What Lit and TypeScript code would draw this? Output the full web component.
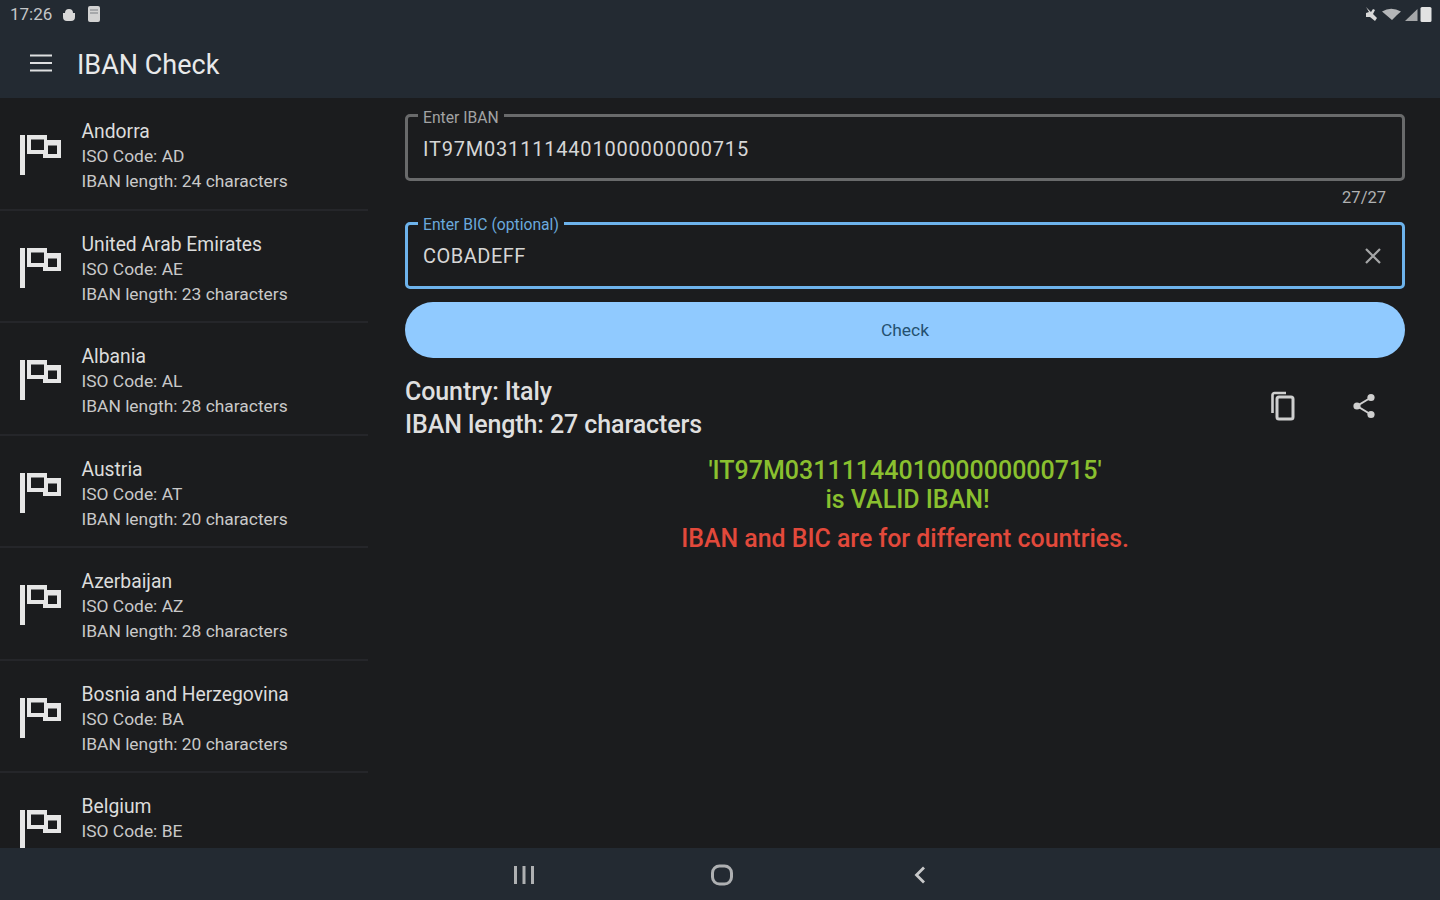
import { LitElement, html, css, svg } from "lit";
import { customElement } from "lit/decorators.js";

const countries = [
  ["Andorra", "AD", 24],
  ["United Arab Emirates", "AE", 23],
  ["Albania", "AL", 28],
  ["Austria", "AT", 20],
  ["Azerbaijan", "AZ", 28],
  ["Bosnia and Herzegovina", "BA", 20],
  ["Belgium", "BE", 0],
] as const;

const flag = svg`<path d="M0 0h5v40H0z" fill="currentColor"/><path d="M7 0h20v5h14v18H23v-4H7z M11 4.500v10.500h13V4.500z M28 10.500v8.500h9v-8.500z" fill="currentColor" fill-rule="evenodd"/>`;

@customElement("app-root")
export class AppRoot extends LitElement {
  static styles = css`
    :host {
      display: flex;
      flex-direction: column;
      width: 1440px;
      height: 900px;
      overflow: hidden;
      background: #1b1c1e;
      color: #e4e4e4;
      font-family: Roboto, "Liberation Sans", sans-serif;
    }
    svg { display: block; }
    .header { height: 98px; flex: none; background: #232a32; display: flex; flex-direction: column; }
    .status { height: 28px; flex: none; display: flex; align-items: center; padding: 0 8px 0 10px; gap: 9px; font-size: 17px; color: #c4c6c8; }
    .status .spacer { flex: 1; }
    .status-right { display: flex; align-items: center; gap: 2px; }
    .toolbar { flex: 1; display: flex; align-items: center; padding-left: 30px; gap: 25px; }
    .title { font-size: 27px; color: #e8e9ea; padding-top: 4px; }
    .body { flex: 1; min-height: 0; display: flex; }
    .list { width: 368px; flex: none; overflow: hidden; }
    .item { height: 112.5px; box-sizing: border-box; display: flex; align-items: flex-start; gap: 19.5px; padding: 21px 0 0 20px; border-bottom: 2px solid #25262a; }
    .item svg { color: #e6e6e6; flex: none; margin-top: 16px; }
    .lines { display: flex; flex-direction: column; color: #c9c9c9; font-size: 17.4px; line-height: 25px; }
    .name { font-size: 19.3px; color: #dcdcdc; }
    .main { flex: 1; min-width: 0; padding: 8.5px 35px 0 37px; box-sizing: border-box; }
    fieldset { margin: 0; padding: 0 15px; height: 74.5px; box-sizing: border-box; border: 3px solid #696a6b; border-radius: 5px; display: flex; align-items: center; justify-content: space-between; }
    legend { font-size: 15.7px; line-height: 14px; padding: 4px 5px 0; margin-left: -5px; color: #a2a3a4; }
    .value { font-size: 20px; letter-spacing: 0.8px; color: #d6d6d6; margin-top: -4px; }
    .focus { border-color: #6db3ec; }
    .focus legend { color: #6aa9dc; }
    .focus .value { letter-spacing: 0.5px; margin-top: -6px; }
    .focus svg { margin: -6px 5px 0 0; color: #a5a6a7; }
    .counter { height: 33px; display: flex; align-items: center; justify-content: flex-end; padding-right: 19px; font-size: 16.5px; color: #b0b1b2; }
    .check { margin-top: 13px; height: 56px; border-radius: 28px; background: #90caff; color: #24506f; display: flex; align-items: center; justify-content: center; font-size: 17.4px; }
    .result { margin-top: 17px; display: flex; align-items: center; }
    .info { flex: 1; font-size: 25px; line-height: 33px; font-weight: 500; color: #dfdfdf; letter-spacing: -0.1px; }
    .actions { display: flex; gap: 56px; padding-right: 29px; align-items: center; color: #cfcfcf; margin-top: -4px; }
    .verdict { margin-top: 15px; text-align: center; font-size: 25px; line-height: 29.5px; font-weight: 500; color: #8ac02f; padding-left: 5px; }
    .verdict-iban { margin-left: -5px; }
    .warn { margin-top: 9px; text-align: center; font-size: 24.9px; line-height: 30px; font-weight: 500; color: #e2493b; }
    .nav { height: 52px; flex: none; background: #232a32; display: flex; align-items: center; color: #aeb0b2; }
    .nav-inner { display: flex; align-items: center; margin-left: 513px; padding-top: 1px; }
    .nav-inner svg:nth-child(1) { margin-right: 176px; }
    .nav-inner svg:nth-child(2) { margin-right: 180px; }
  `;

  render() {
    return html`
      <div class="header">
        <div class="status">
          <span>17:26</span>
          <svg width="16" height="16" viewBox="0 0 16 16"><path d="M2 7h12v4a4 4 0 0 1-4 4H6a4 4 0 0 1-4-4zM4 7a4 4 0 0 1 8 0z" fill="#d8d8d8"/></svg>
          <svg width="16" height="18" viewBox="0 0 16 18"><rect x="2" y="1" width="12" height="16" rx="2" fill="#d2d2d2"/><path d="M4 5h8M4 8h8" stroke="#7b7f83" stroke-width="1"/></svg>
          <span class="spacer"></span>
          <div class="status-right">
            <svg width="16" height="16" viewBox="0 0 16 16"><path d="M3 1l5 5 2-3 2 1-2 4 4 4-2 3-5-4-4 0 0-4 3-1z" fill="#d8d8d8"/></svg>
            <svg width="21" height="14" viewBox="0 0 21 14"><path d="M1 4.500Q10-1 20 4.500L16 8 11 13z" fill="#b4b6b8"/></svg>
            <svg width="14" height="13" viewBox="0 0 14 13"><path d="M13.500 1v12H1z" fill="#a5a7a9"/></svg>
            <svg width="12" height="17" viewBox="0 0 12 17"><rect x="0.500" y="1" width="11" height="15" rx="1.500" fill="#e2e2e2"/></svg>
          </div>
        </div>
        <div class="toolbar">
          <svg width="22" height="18" viewBox="0 0 22 18"><path d="M0 1.500h22M0 9h22M0 16.500h22" stroke="#dedfe0" stroke-width="2.200"/></svg>
          <span class="title">IBAN Check</span>
        </div>
      </div>
      <div class="body">
        <div class="list">
          ${countries.map(
            ([n, c, l]) => html`
              <div class="item">
                <svg width="42" height="40" viewBox="0 0 42 40">${flag}</svg>
                <div class="lines">
                  <span class="name">${n}</span>
                  <span>ISO Code: ${c}</span>
                  ${l ? html`<span>IBAN length: ${l} characters</span>` : ""}
                </div>
              </div>
            `
          )}
        </div>
        <div class="main">
          <fieldset>
            <legend>Enter IBAN</legend>
            <span class="value">IT97M0311114401000000000715</span>
          </fieldset>
          <div class="counter">27/27</div>
          <fieldset class="focus">
            <legend>Enter BIC (optional)</legend>
            <span class="value">COBADEFF</span>
            <svg width="18" height="18" viewBox="0 0 18 18"><path d="M2 2l14 14M16 2L2 16" stroke="currentColor" stroke-width="2.200"/></svg>
          </fieldset>
          <div class="check">Check</div>
          <div class="result">
            <div class="info">Country: Italy<br />IBAN length: 27 characters</div>
            <div class="actions">
              <svg width="26" height="30" viewBox="0 0 26 30"><path d="M2.500 22V4a2 2 0 0 1 2-2H16" fill="none" stroke="currentColor" stroke-width="2.600"/><rect x="7" y="6" width="16" height="22" rx="2" fill="none" stroke="currentColor" stroke-width="3"/></svg>
              <svg width="24" height="26" viewBox="0 0 24 26"><path d="M19 4.500L5 13l14 8.500" fill="none" stroke="currentColor" stroke-width="2"/><circle cx="19" cy="4.500" r="3.600" fill="currentColor"/><circle cx="5" cy="13" r="3.600" fill="currentColor"/><circle cx="19" cy="21.500" r="3.600" fill="currentColor"/></svg>
            </div>
          </div>
          <div class="verdict"><span class="verdict-iban">'IT97M0311114401000000000715'</span><br />is VALID IBAN!</div>
          <div class="warn">IBAN and BIC are for different countries.</div>
        </div>
      </div>
      <div class="nav">
        <div class="nav-inner">
          <svg width="22" height="20" viewBox="0 0 22 20"><path d="M2.500 1v18M11 1v18M19.500 1v18" stroke="currentColor" stroke-width="3"/></svg>
          <svg width="22" height="22" viewBox="0 0 22 22"><rect x="1.500" y="2" width="19" height="18" rx="7" fill="none" stroke="currentColor" stroke-width="3"/></svg>
          <svg width="14" height="20" viewBox="0 0 14 20"><path d="M11 2.500L3.500 10l7.500 7.500" fill="none" stroke="#c8c9ca" stroke-width="2.800"/></svg>
        </div>
      </div>
    `;
  }
}
